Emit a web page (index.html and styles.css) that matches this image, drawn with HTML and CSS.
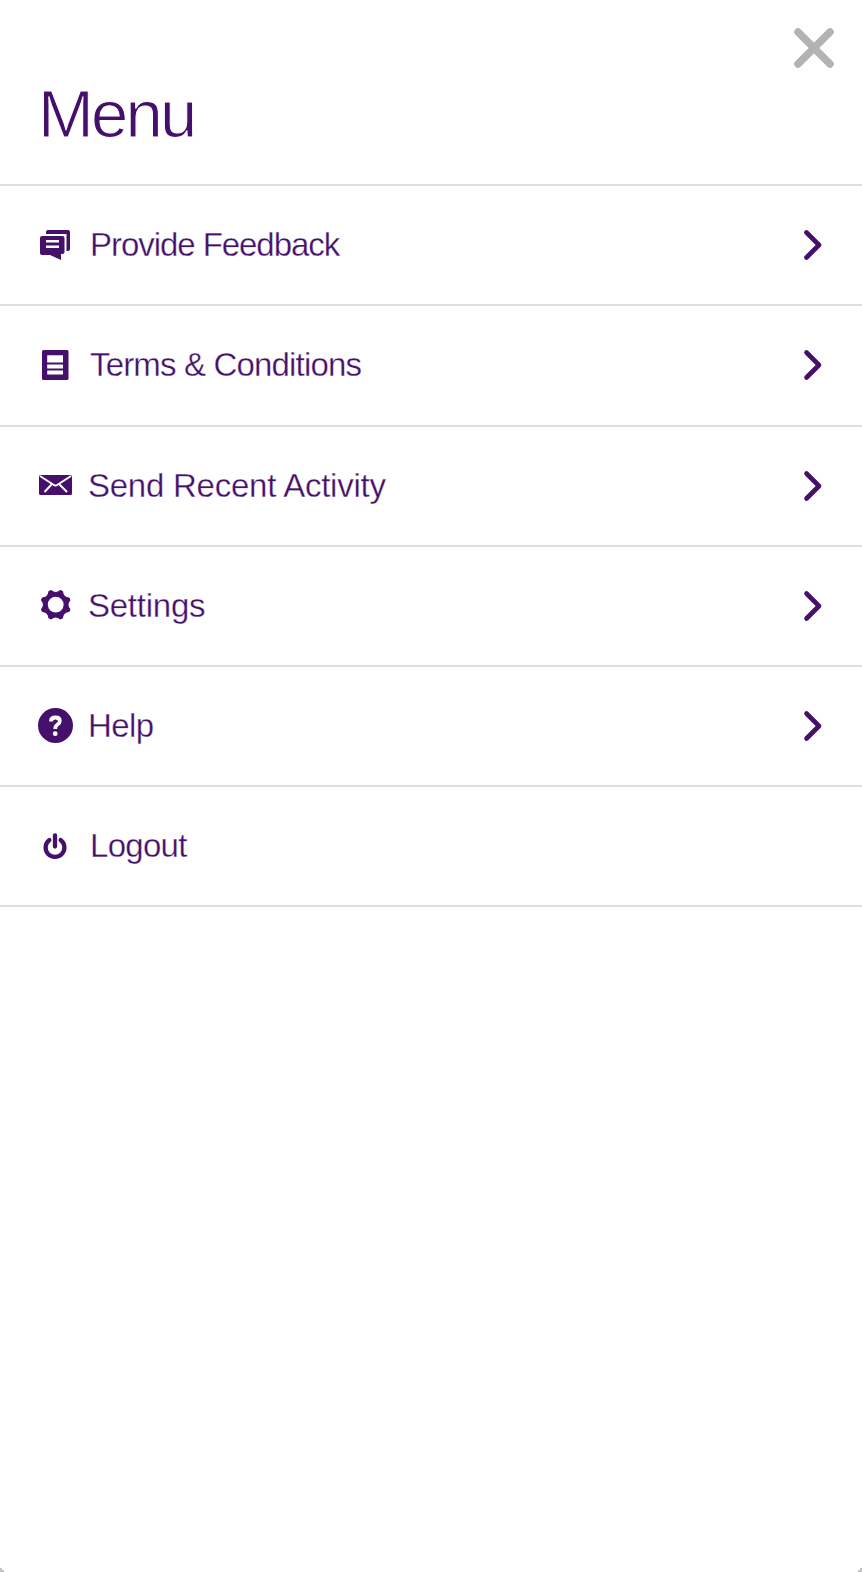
FILE: index.html
```
<!DOCTYPE html>
<html lang="en">
<head>
<meta charset="utf-8">
<title>Menu</title>
<link rel="stylesheet" href="styles.css">
</head>
<body>
<main class="screen">
  <header class="header">
    <h1 class="title">Menu</h1>
    <svg class="close" viewBox="0 0 42 42" role="img" aria-label="Close"><path d="M5 5 37 37M37 5 5 37"/></svg>
  </header>
  <nav class="list">
    <a class="row">
      <svg class="icon" viewBox="0 0 36 36"><path d="M9 7V5Q9 3 11 3H31Q33 3 33 5V22Q33 24 29.500 24V7Z"/><path d="M5 9H25.500Q27.500 9 27.500 11V25Q27.500 27 25.500 27H24V33L13 28H5Q3 28 3 26V11Q3 9 5 9Z"/><path class="line" d="M9 14.200H22M9 19.800H22"/></svg>
      <span class="label tight">Provide Feedback</span>
      <svg class="chevron" viewBox="0 0 20 32"><path d="M3.500 3.500 16 16 3.500 28.500"/></svg>
    </a>
    <a class="row tall">
      <svg class="icon" viewBox="0 0 36 36"><rect x="5" y="3" width="26.500" height="30" rx="1.500"/><path class="paper" d="M10.200 8.300H26V15.500H10.200ZM10.200 17.500H26V21.500H10.200ZM10.200 23.500H26V27.500H10.200Z"/></svg>
      <span class="label terms">Terms &amp; Conditions</span>
      <svg class="chevron" viewBox="0 0 20 32"><path d="M3.500 3.500 16 16 3.500 28.500"/></svg>
    </a>
    <a class="row">
      <svg class="icon" viewBox="0 0 36 36"><rect x="2" y="7" width="33" height="20" rx="1.500"/><path class="fold" d="M3 8 16.500 16.800Q18.500 18.300 20.500 16.800L34 8M14.500 16.500 7.500 24M22.500 16.500 30 24"/></svg>
      <span class="label wide">Send Recent Activity</span>
      <svg class="chevron" viewBox="0 0 20 32"><path d="M3.500 3.500 16 16 3.500 28.500"/></svg>
    </a>
    <a class="row">
      <svg class="icon" viewBox="0 0 36 36"><g class="gear" transform="translate(18.700 16.700)"><path d="M14.100 4.600 13.200 6.700Q7.300 7.300 6.700 13.200L4.600 14.100Q0 10.300-4.600 14.100L-6.700 13.200Q-7.300 7.300-13.200 6.700L-14.100 4.600Q-10.300 0-14.100-4.600L-13.200-6.700Q-7.300-7.300-6.700-13.200L-4.600-14.100Q0-10.300 4.600-14.100L6.700-13.200Q7.300-7.300 13.200-6.700L14.100-4.600Q10.300 0 14.100 4.600Z"/><circle class="hole" r="7.900"/></g></svg>
      <span class="label wide">Settings</span>
      <svg class="chevron" viewBox="0 0 20 32"><path d="M3.500 3.500 16 16 3.500 28.500"/></svg>
    </a>
    <a class="row">
      <svg class="icon" viewBox="0 0 36 36"><circle cx="18.500" cy="17.500" r="17.500"/><path class="question" d="M14 13.500Q14 9.500 18.400 9.500Q22.800 9.500 22.800 13Q22.800 15 20.500 16.500Q18.200 18 18.200 21"/><circle class="paper" cx="18.200" cy="25.700" r="2.400"/></svg>
      <span class="label help">Help</span>
      <svg class="chevron" viewBox="0 0 20 32"><path d="M3.500 3.500 16 16 3.500 28.500"/></svg>
    </a>
    <a class="row">
      <svg class="icon" viewBox="0 0 36 36"><path class="power" d="M18 7.300V18.500M12.400 12A9.400 9.400 0 1 0 23.600 12"/></svg>
      <span class="label logout">Logout</span>
    </a>
  </nav>
</main>
</body>
</html>
```
FILE: styles.css
```
body {
  margin: 0;
  background: #fff;
  color: #45106b;
  font-family: "Liberation Sans", Arial, sans-serif;
}

.screen {
  position: relative;
  box-sizing: border-box;
  height: 1572px;
  overflow: hidden;
}

/* Small grey marks in the bottom corners */
.screen::before,
.screen::after {
  content: "";
  position: absolute;
  bottom: 0;
  width: 4px;
  height: 4px;
  background: #c4c4c4;
}

.screen::before {
  left: 0;
  clip-path: polygon(0 0, 50% 0, 50% 50%, 100% 50%, 100% 100%, 0 100%);
}

.screen::after {
  right: 0;
  clip-path: polygon(100% 0, 50% 0, 50% 50%, 0 50%, 0 100%, 100% 100%);
}

.header {
  box-sizing: border-box;
  display: flex;
  justify-content: space-between;
  align-items: flex-start;
  height: 186px;
  padding: 27px 27px 0 38px;
  border-bottom: 2px solid #e0e0e0;
}

.title {
  margin: 48px 0 0;
  font-size: 67px;
  font-weight: 400;
  line-height: 77px;
  letter-spacing: -2.8px;
  -webkit-text-stroke: 1px #fff;
}

.close {
  width: 42px;
  height: 42px;
  fill: none;
  stroke: #b3b3b3;
  stroke-width: 7.5;
  stroke-linecap: round;
}

.row {
  box-sizing: border-box;
  display: flex;
  align-items: center;
  height: 120px;
  padding: 0 37px;
  border-bottom: 2px solid #e0e0e0;
}

.tall {
  height: 121px;
  padding-bottom: 1px;
}

.icon {
  flex: none;
  width: 36px;
  height: 36px;
  fill: #45106b;
}

.paper,
.hole {
  fill: #fff;
}

.line,
.fold,
.question {
  fill: none;
  stroke: #fff;
  stroke-width: 2.5;
}

.fold {
  stroke-width: 1.9;
}

.question {
  stroke-width: 3.8;
}

.gear {
  stroke: #45106b;
  stroke-width: 1.2;
  stroke-linejoin: round;
}

.hole {
  stroke: none;
}

.power {
  fill: none;
  stroke: #45106b;
  stroke-width: 4.3;
  stroke-linecap: round;
}

.label {
  flex: 1;
  margin-left: 17px;
  font-size: 33px;
  line-height: 40px;
  letter-spacing: -0.25px;
  white-space: nowrap;
  -webkit-text-stroke: 0.3px #fff;
}

.tight {
  letter-spacing: -1.05px;
}

.terms {
  letter-spacing: -0.83px;
}

.wide {
  margin-left: 15px;
}

.help {
  margin-left: 15px;
  letter-spacing: -0.6px;
}

.logout {
  letter-spacing: -0.7px;
}

.chevron {
  width: 20px;
  height: 32px;
  margin-right: 2px;
  fill: none;
  stroke: #45106b;
  stroke-width: 4.6;
  stroke-linecap: round;
  stroke-linejoin: round;
}
```
